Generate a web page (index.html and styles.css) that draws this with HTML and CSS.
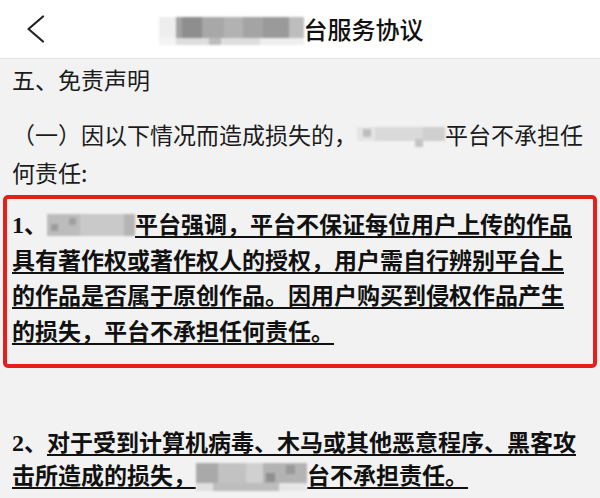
FILE: index.html
```html
<!DOCTYPE html>
<html lang="zh-CN">
<head>
<meta charset="utf-8">
<title>平台服务协议</title>
<link rel="stylesheet" href="styles.css">
</head>
<body>
<header class="nav">
  <div class="nav-left">
    <svg class="back" width="18" height="28" viewBox="0 0 18 28"><polyline points="16,1.5 1.5,14 16,26.5" fill="none" stroke="#222" stroke-width="2.2" stroke-linecap="round" stroke-linejoin="round"/></svg>
  </div>
  <h1 class="title"><span class="mosaic m-title"></span>台服务协议</h1>
  <div class="nav-right"></div>
</header>
<main class="content">
  <p class="heading">五、免责声明</p>
  <p class="para">（一）因以下情况而造成损失的，<span class="mosaic m-inline"></span>平台不承担任<br>何责任:</p>
  <div class="notice">
    <p class="strong"><span class="num">1</span>、<span class="mosaic m-p1"></span><u>平台强调，平台不保证每位用户上传的作品<br>具有著作权或著作权人的授权，用户需自行辨别平台上<br>的作品是否属于原创作品。因用户购买到侵权作品产生<br>的损失，平台不承担任何责任。</u></p>
  </div>
  <p class="strong p2"><span class="num">2</span>、<u>对于受到计算机病毒、木马或其他恶意程序、黑客攻<br>击所造成的损失，</u><span class="mosaic m-p2"></span><u>台不承担责任。</u></p>
</main>
</body>
</html>
```
FILE: styles.css
```css
html, body {
  margin: 0;
  padding: 0;
}
body {
  width: 600px;
  height: 498px;
  overflow: hidden;
  background: #f2f2f2;
  font-family: "Noto Sans CJK SC", "Noto Sans", sans-serif;
  color: #1c1c1c;
}
.nav {
  height: 58px;
  background: #fff;
  border-bottom: 1px solid #e2e2e2;
  display: grid;
  grid-template-columns: 1fr auto 1fr;
  align-items: center;
}
.nav-left {
  padding-left: 27px;
  display: flex;
  align-items: center;
}
.back {
  display: block;
}
.title {
  margin: 0 0 0 -18px;
  font-size: 24px;
  font-weight: 500;
  color: #111;
  line-height: 58px;
  display: flex;
  align-items: center;
}
.mosaic {
  display: inline-block;
  vertical-align: middle;
  filter: blur(1.2px);
}
.m-title {
  width: 145px;
  height: 28px;
  margin-top: 4px;
  background:
    linear-gradient(#bdbdbd, #bdbdbd) 50px 21px / 12px 8px no-repeat,
    linear-gradient(90deg, rgba(236,236,236,0.9) 0 12%, #a3a3a3 12% 16%, #8e8e8e 16% 30%, #a8a8a8 30% 45%, #b2b2b2 45% 58%, #a4a4a4 58% 72%, #9a9a9a 72% 90%, #bdbdbd 90% 100%) 0 0 / 100% 21px no-repeat,
    linear-gradient(90deg, #f4f4f4 0 12%, #dedede 12% 70%, #eee 70%) 0 21px / 100% 7px no-repeat;
}
.content {
  padding: 0 3px;
}
.heading {
  margin: 0;
  padding: 0 9px;
  font-size: 23px;
  line-height: 40px;
}
.para {
  margin: 16px 0 0;
  padding: 0 9px;
  font-size: 23px;
  line-height: 38px;
}
.m-inline {
  width: 88px;
  height: 22px;
  margin-top: -4px;
  background:
    linear-gradient(#bdbdbd, #bdbdbd) 6px 4px / 8px 8px no-repeat,
    linear-gradient(#c4c4c4, #c4c4c4) 58px 14px / 8px 8px no-repeat,
    linear-gradient(90deg, #e4e4e4 0 20%, #dadada 20% 75%, #cfcfcf 75% 100%) 0 2px / 100% 14px no-repeat;
}
.notice {
  margin-top: 4px;
  border: 4px solid #e5201c;
  border-radius: 5px;
  padding: 8px 5px 15px;
}
.strong {
  margin: 0;
  font-family: "Liberation Serif", "Noto Sans CJK SC", serif;
  font-weight: 700;
  font-size: 23px;
  line-height: 33.5px;
  color: #111;
}
.strong u {
  font-family: "Noto Sans CJK SC", sans-serif;
  text-decoration-thickness: 2px;
  text-underline-offset: 3px;
}
.num {
  font-family: "Liberation Serif", serif;
  font-size: 24px;
}
.m-p1 {
  width: 88px;
  height: 22px;
  margin-top: -6px;
  background:
    linear-gradient(#9c9c9c, #9c9c9c) 4px 10px / 7px 7px no-repeat,
    linear-gradient(#a0a0a0, #a0a0a0) 22px 4px / 7px 7px no-repeat,
    linear-gradient(90deg, #bcbcbc 0 38%, #c9c9c9 38% 88%, #b5b5b5 88% 100%) 0 0 / 100% 22px no-repeat;
}
.p2 {
  margin-top: 58px;
  padding: 0 9px;
  line-height: 31px;
}
.m-p2 {
  width: 111px;
  height: 28px;
  margin-top: -4px;
  background:
    linear-gradient(#8f8f8f, #8f8f8f) 70px 10px / 9px 9px no-repeat,
    linear-gradient(#999, #999) 90px 2px / 9px 9px no-repeat,
    linear-gradient(90deg, #a9a9a9 0 20%, #c2c2c2 20% 45%, #d0d0d0 45% 60%, #b3b3b3 60% 100%) 0 0 / 100% 20px no-repeat,
    linear-gradient(90deg, #e0e0e0 0 15%, #bdbdbd 15% 75%, #e6e6e6 75%) 0 20px / 100% 8px no-repeat;
}
```
